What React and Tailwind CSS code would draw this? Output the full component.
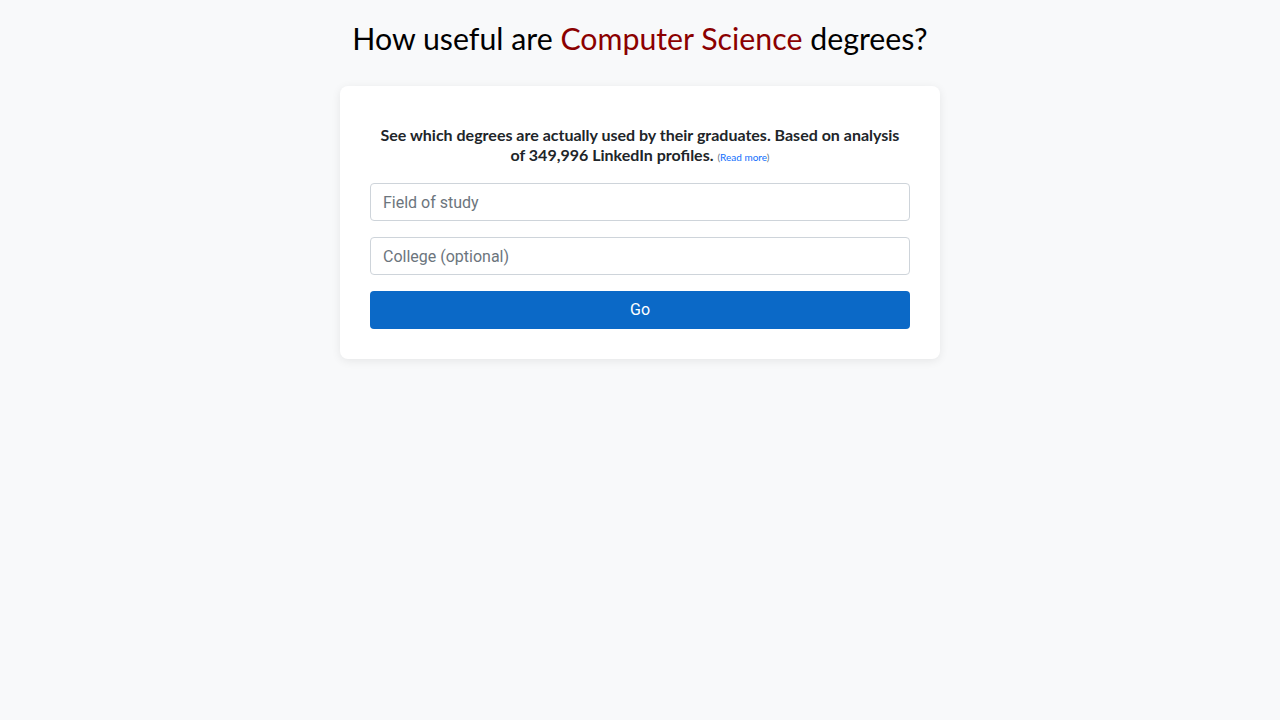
export default function App() {
  return (
    <div className="min-h-screen bg-[#f8f9fa] flex flex-col items-center" style={{ fontFamily: '"Lato", "Noto Sans", sans-serif' }}>
      <h1 className="mt-[17px] text-[30.3px] leading-[42px] text-black">
        How useful are <span className="text-[#8b0000]">Computer Science</span> degrees?
      </h1>

      <div className="mt-[27px] w-[600px] bg-white rounded-lg shadow-[0_2px_10px_rgba(0,0,0,0.08)] px-[30px] pt-[39px] pb-[30px]">
        <p className="text-center text-[16px] leading-[20px] font-bold text-[#212529] px-[8px]">
          See which degrees are actually used by their graduates. Based on analysis of 349,996 LinkedIn profiles.{' '}
          <span className="text-[10px] leading-[20px] font-normal text-[#6c757d]">
            (<a href="#" className="text-[#0d6efd]">Read more</a>)
          </span>
        </p>

        <div className="mt-[16px] flex flex-col gap-4" style={{ fontFamily: 'Roboto, sans-serif' }}>
          <input
            type="text"
            placeholder="Field of study"
            className="h-[38px] w-full rounded border border-[#ced4da] bg-white px-3 text-base text-[#212529] placeholder:text-[#6c757d] outline-none"
          />
          <input
            type="text"
            placeholder="College (optional)"
            className="h-[38px] w-full rounded border border-[#ced4da] bg-white px-3 text-base text-[#212529] placeholder:text-[#6c757d] outline-none"
          />
          <button className="h-[38px] w-full rounded bg-[#0b69c7] text-base text-white">Go</button>
        </div>
      </div>
    </div>
  )
}
